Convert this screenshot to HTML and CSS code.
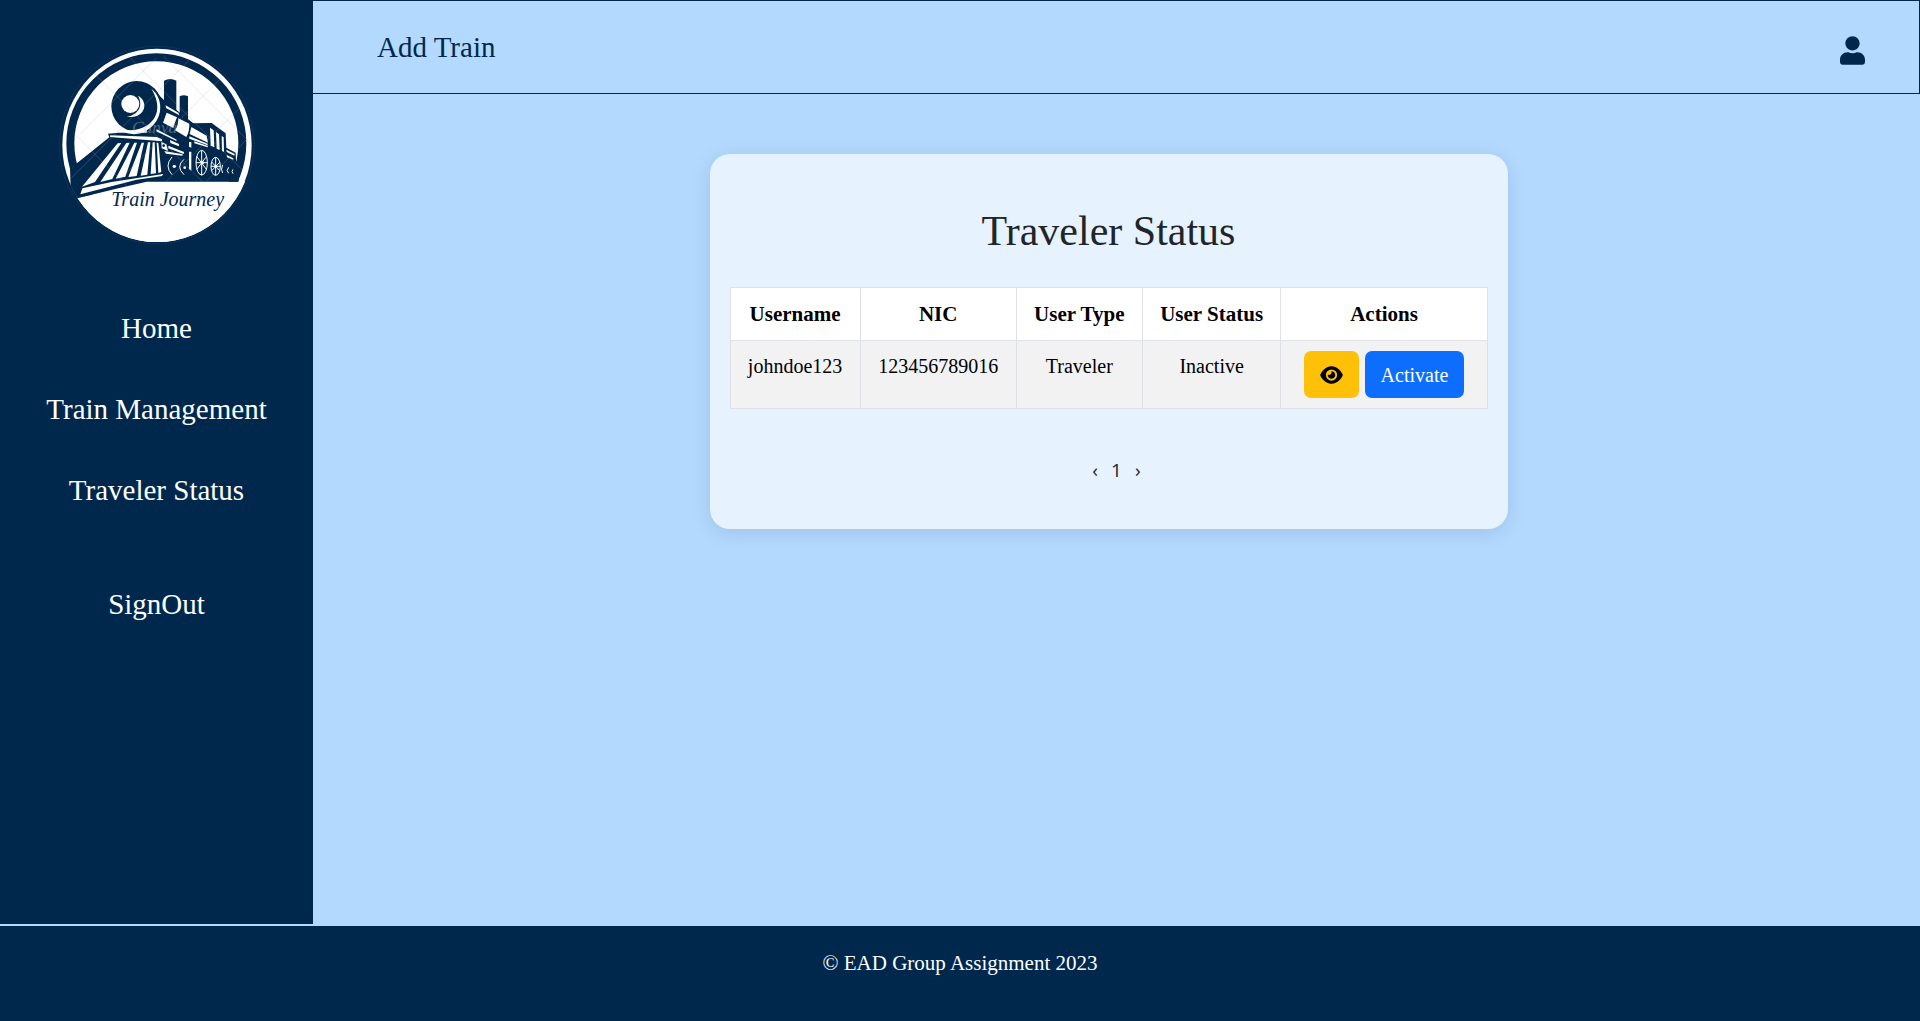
FILE: index.html
```html
<!DOCTYPE html>
<html lang="en">
<head>
<meta charset="utf-8">
<meta name="viewport" content="width=device-width, initial-scale=1">
<title>Traveler Status</title>
<link rel="stylesheet" href="styles.css">
</head>
<body>
<div class="layout">
  <aside class="sidebar">
    <svg class="logo" viewBox="0 0 645 660" role="img" aria-label="Train Journey">
      <defs>
        <clipPath id="badge"><ellipse cx="321" cy="328" rx="285" ry="290"/></clipPath>
      </defs>
      <ellipse class="logo-rim" cx="320" cy="327" rx="292" ry="296"/>
      <ellipse class="white" cx="321" cy="328" rx="284" ry="290"/>
      <g clip-path="url(#badge)">
        <circle class="ring" cx="319" cy="322" r="258"/>
        <path class="white" d="M640 437H272L205 457 82 486 0 520V660H645Z"/>
        <!-- ground and cowcatcher -->
        <path class="navy" d="M60 395 75 386 178 304 174 293 206 290 335 290 420 262 485 261 527 292 529 335 557 350 558 374 568 385 566 437H290L205 457 82 487 62 455Z"/>
        <!-- chimneys and boiler -->
        <path class="navy" d="M342 134q19-10 37 0V230H342ZM389 181q13-7 25 0V258H389Z"/>
        <path class="navy" d="M290 142 345 195 430 262 470 300 450 330H290Z"/>
        <ellipse class="navy" cx="260" cy="211" rx="76" ry="76"/>
        <path class="white" d="M304 158C345 190 342 262 276 291 236 302 204 284 196 268 226 290 262 285 288 270 325 248 334 207 304 158Z"/>
        <circle class="white" cx="241" cy="204" r="27"/>
        <path class="white" d="M264 179C296 195 290 248 230 243 262 236 282 213 264 179Z"/>
        <path class="white" d="M347 208 385 230 388 238 348 216ZM350 230 381 244Q374 261 370 276L339 260ZM385 247 418 263Q419 285 409 303L375 283Q385 270 385 247ZM424 273 470 299 474 320 419 294ZM418 301 473 323V328L418 308Z"/>
        <path class="white" d="M480 275 491 283 493 334 482 329ZM498 288 507 295 509 342 500 338ZM515 300 521 304 522 348 516 345ZM529 341 554 354 553 359 530 348ZM530 357 550 367 550 371 531 364Z"/>
        <!-- front beam and slats -->
        <path class="white" d="M181 298 320 303 336 310V316L180 303Z"/>
        <path class="white" d="M203 322 214 321 135 438 96 452ZM229 321 239 320 187 429 151 438ZM253 320 261 320 226 422 197 428ZM275 320 282 320 260 420 235 423ZM294 319 301 319 292 416 272 419ZM308 319 314 319 318 412 302 414ZM320 320 325 321 334 408 325 411Z"/>
        <path class="white" d="M97 457 185 438 340 414 336 420 260 431 91 475Z"/>
        <path class="white" d="M320 280 380 311 379 315 319 286ZM334 318 349 325 354 345 335 337ZM355 329 402 348 401 354 355 337ZM343 345 398 355 397 359 348 353ZM360 312 387 324 387 331 361 321ZM417 318 424 318 424 335 417 332ZM417 347 424 347 424 404 417 399ZM433 316 474 330 473 334 433 322Z"/>
        <circle class="navy" cx="341" cy="329" r="4"/>
        <!-- running gear -->
        <g class="wheel">
          <ellipse cx="455" cy="380" rx="17" ry="37"/>
          <path d="M455 344V418M440 361 470 401M440 400 470 361M438 380H472"/>
          <ellipse cx="497" cy="391" rx="14" ry="27"/>
          <path d="M497 365V417M485 378 510 405M485 404 510 378M483 391H511"/>
          <path d="M366 363Q342 390 366 416M402 370Q376 392 402 416M518 387Q511 400 518 411M536 394Q527 404 536 412M549 400Q543 407 549 413"/>
        </g>
        <circle class="white" cx="373" cy="391" r="5"/>
        <circle class="white" cx="404" cy="395" r="4"/>
        <circle class="white" cx="457" cy="380" r="5"/>
        <circle class="white" cx="497" cy="391" r="4"/>
        <path class="mesh" d="M120 100 460 440M235 60 580 405M70 290 235 455M120 100 60 160M320 65 90 295M420 70 65 425M520 120 210 430M595 190 350 435M590 310 470 435M340 60 600 320"/>
        <text class="mark" x="246" y="290">Canva</text>
        <text class="script" x="184" y="511">Train Journey</text>
      </g>
    </svg>
    <nav class="menu">
      <a href="#">Home</a>
      <a href="#">Train Management</a>
      <a href="#">Traveler Status</a>
      <a class="signout" href="#">SignOut</a>
    </nav>
  </aside>
  <div class="content">
    <header class="topbar">
      <span>Add Train</span>
      <a class="profile" href="#" aria-label="Profile">
        <svg viewBox="0 0 448 512"><path d="M224 256c70.7 0 128-57.3 128-128S294.7 0 224 0 96 57.3 96 128s57.3 128 128 128zm89.6 32h-16.7c-22.2 10.2-46.9 16-72.9 16s-50.6-5.8-72.9-16h-16.7C60.2 288 0 348.2 0 422.4V464c0 26.5 21.5 48 48 48h352c26.5 0 48-21.5 48-48v-41.6c0-74.2-60.2-134.4-134.4-134.4z"/></svg>
      </a>
    </header>
    <main class="main">
      <section class="card">
        <h1>Traveler Status</h1>
        <table>
          <thead>
            <tr><th>Username</th><th>NIC</th><th>User Type</th><th>User Status</th><th>Actions</th></tr>
          </thead>
          <tbody>
            <tr>
              <td>johndoe123</td><td>123456789016</td><td>Traveler</td><td>Inactive</td>
              <td>
                <div class="actions">
                  <button class="btn view" type="button" aria-label="View">
                    <svg viewBox="0 0 576 512"><path d="M288 32c-80.8 0-145.5 36.8-192.6 80.6C48.6 156 17.3 208 2.5 243.7c-3.3 7.9-3.3 16.7 0 24.6C17.3 304 48.6 356 95.4 399.4C142.5 443.2 207.2 480 288 480s145.5-36.8 192.6-80.6c46.8-43.5 78.1-95.4 93-131.1c3.3-7.9 3.3-16.7 0-24.6c-14.9-35.7-46.2-87.7-93-131.1C433.5 68.8 368.8 32 288 32zM144 256a144 144 0 1 1 288 0 144 144 0 1 1 -288 0zm144-64c0 35.3-28.7 64-64 64c-7.1 0-13.9-1.2-20.3-3.3c-5.5-1.8-11.9 1.6-11.7 7.4c.3 6.9 1.3 13.8 3.2 20.7c13.7 51.2 66.4 81.6 117.6 67.9s81.6-66.4 67.9-117.6c-11.1-41.5-47.8-69.4-88.6-71.1c-5.8-.2-9.2 6.1-7.4 11.7c2.1 6.4 3.3 13.2 3.3 20.3z"/></svg>
                  </button>
                  <button class="btn activate" type="button">Activate</button>
                </div>
              </td>
            </tr>
          </tbody>
        </table>
        <nav class="pages" aria-label="Pages">
          <a href="#" aria-label="Previous page">‹</a>
          <a href="#" aria-current="page">1</a>
          <a href="#" aria-label="Next page">›</a>
        </nav>
      </section>
    </main>
  </div>
</div>
<footer class="footer">© EAD Group Assignment 2023</footer>
</body>
</html>
```
FILE: styles.css
```css
:root {
  --navy: #00284d;
  --sky: #b3d9ff;
}

* { box-sizing: border-box; }

body {
  margin: 0;
  min-height: 100vh;
  display: flex;
  flex-direction: column;
  background: var(--sky);
  color: #212529;
  font: 20px/30px "Liberation Serif", "Times New Roman", serif;
}

a { color: inherit; text-decoration: none; }

.layout { flex: 1; display: flex; }

.sidebar {
  flex: 0 0 313px;
  margin-bottom: 2px;
  padding: 36px 0;
  background: var(--navy);
  color: #fff;
  display: flex;
  flex-direction: column;
  align-items: center;
}

.logo { width: 215px; height: 220px; margin-left: 2px; }
.logo .white { fill: #fff; }
.logo .navy { fill: var(--navy); }
.logo-rim { fill: none; stroke: #3d5b78; stroke-width: 1; stroke-dasharray: 6 3; }
.logo .ring { fill: none; stroke: var(--navy); stroke-width: 24; }
.logo .wheel { fill: none; stroke: #fff; stroke-width: 3; }
.logo .mesh { fill: none; stroke: #a4adb8; stroke-width: 2; opacity: 0.4; }
.logo .mark { fill: #b5bec8; opacity: 0.4; font: italic 52px "Liberation Serif", serif; }
.logo .script { fill: var(--navy); font: italic 60px "Liberation Serif", cursive; }

.menu {
  width: 100%;
  padding-top: 32px;
  display: flex;
  flex-direction: column;
  text-align: center;
  font-size: 29px;
  line-height: 41px;
}
.menu a { padding: 20px 0; }
.menu .signout { margin-top: 33px; }

.content { flex: 1; min-width: 0; }

.topbar {
  height: 94px;
  padding: 0 54px 0 64px;
  border: 1px solid var(--navy);
  border-left: 0;
  display: flex;
  align-items: center;
  justify-content: space-between;
  color: var(--navy);
  font-size: 29px;
}
.profile { padding-top: 6px; display: flex; }
.profile svg { width: 25px; height: 29px; fill: currentColor; }

.main { padding: 60px 16px 60px 0; }

.card {
  max-width: 798px;
  margin: 0 auto;
  padding: 51px 20px 44px;
  border-radius: 20px;
  background: #e6f3ff;
  box-shadow: 0 4px 20px rgba(0, 0, 0, 0.1);
}
.card h1 {
  margin: 0 0 30px;
  font-size: 42px;
  font-weight: 400;
  line-height: 52px;
  text-align: center;
}

table {
  width: 100%;
  border-collapse: collapse;
  background: #fff;
  color: #000;
  text-align: center;
}
th, td { padding: 10px 16px; border: 1px solid #dee2e6; vertical-align: top; }
th { font-size: 21px; line-height: 32px; white-space: nowrap; }
td { background: #f2f2f2; }
td:last-child { padding: 10px 20px; }

.actions { display: flex; justify-content: center; gap: 6px; }
.btn {
  height: 47px;
  padding: 0 16px;
  border: 0;
  border-radius: 7px;
  font: inherit;
  display: flex;
  align-items: center;
}
.view { background: #ffc107; color: #000; }
.view svg { width: 23px; height: 20px; fill: currentColor; }
.activate { background: #0d6efd; color: #fff; }

.pages {
  margin-top: 46px;
  padding-left: 16px;
  display: flex;
  justify-content: center;
  gap: 13px;
  font-family: "Open Sans", sans-serif;
  font-size: 19px;
}

.footer {
  min-height: 95px;
  padding: 21px 0;
  background: var(--navy);
  color: #fff;
  text-align: center;
  font-size: 21px;
  line-height: 32px;
}
```
